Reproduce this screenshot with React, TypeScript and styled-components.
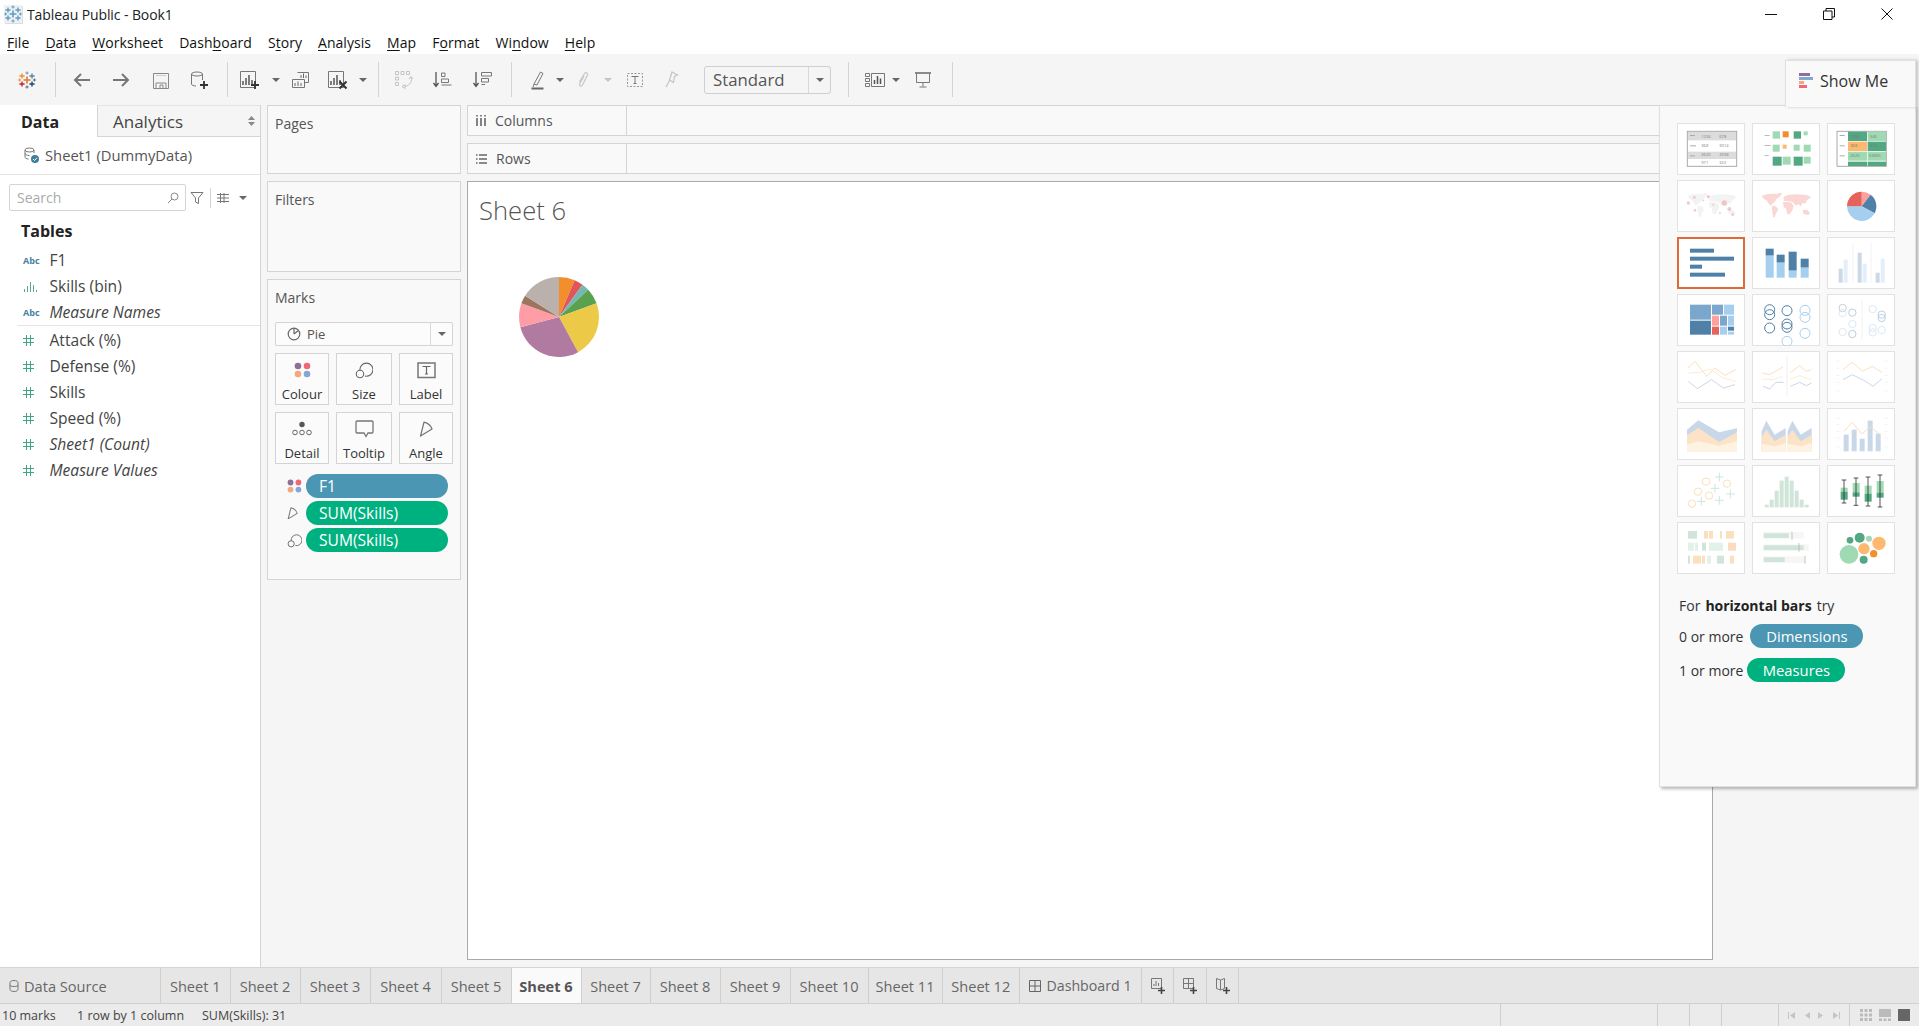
import React from "react";
import styled, { createGlobalStyle } from "styled-components";

const FONT = `"Open Sans", "Noto Sans", "Liberation Sans", sans-serif`;

const Global = createGlobalStyle`
  html, body { margin: 0; padding: 0; background: #fff; overflow: hidden; }
  * { box-sizing: border-box; }
  body { font-family: ${FONT}; color: #333; }
`;

const Page = styled.div`
  width: 1919px; height: 1026px; display: flex; flex-direction: column; background: #f5f5f5; overflow: hidden;
`;
const TitleBar = styled.div`
  height: 27px; flex: none; background: #fff; display: flex; align-items: center; padding-left: 4px;
`;
const TitleText = styled.span`
  font-size: 14px; color: #222; margin-left: 5px; margin-top: 1px; flex: 1; letter-spacing: -0.1px;
`;
const WinControls = styled.div`
  display: flex; align-items: center; padding-right: 26px; gap: 46px; margin-top: 0;
`;
const MenuBar = styled.div`
  height: 27px; flex: none; background: #fff; display: flex; align-items: center; gap: 16px; padding: 3px 0 0 7px;
`;
const MenuItem = styled.span`
  font-size: 14px; color: #111; letter-spacing: 0.05px;
  u { text-decoration-thickness: 1px; text-underline-offset: 2px; }
`;
const Toolbar = styled.div`
  height: 51px; flex: none; background: #f5f5f5; display: flex; align-items: center;
`;
const ToolGroup = styled.div<{ $w: number; $pl: number }>`
  width: ${p => p.$w}px; height: 35px; padding-left: ${p => p.$pl}px; display: flex; align-items: center; flex: none;
  border-right: 1px solid #d4d4d4;
`;
const ToolCell = styled.div<{ $w: number }>`
  width: ${p => p.$w}px; flex: none; display: flex; align-items: center; justify-content: center; height: 24px;
`;
const Caret = styled.span<{ $c?: string }>`
  display: inline-block; width: 0; height: 0; border-left: 4px solid transparent; border-right: 4px solid transparent;
  border-top: 4px solid ${p => p.$c ?? "#666"};
`;
const Combo = styled.div`
  margin-left: 18px; width: 127px; height: 28px; border: 1px solid #cfcfcf; border-radius: 3px; display: flex; align-items: center;
  font-size: 16.8px; color: #555; background: #f5f5f5;
`;
const ComboLabel = styled.span`
  flex: 1; padding-left: 8px; height: 100%; display: flex; align-items: center; border-right: 1px solid #d8d8d8;
`;
const ComboArrow = styled.span`
  width: 21px; display: flex; justify-content: center;
`;
const Body = styled.div`
  flex: 1; min-height: 0; display: flex; position: relative;
`;
const LeftPanel = styled.div`
  width: 261px; flex: none; background: #fff; border-right: 1px solid #d4d4d4; display: flex; flex-direction: column;
`;
const TabRow = styled.div`
  height: 32px; flex: none; display: flex;
`;
const DataTab = styled.div`
  width: 97px; font-size: 16px; font-weight: 700; color: #222; padding: 2px 0 0 21px; display: flex; align-items: center;
`;
const AnalyticsTab = styled.div`
  flex: 1; background: #f5f5f5; border-left: 1px solid #d4d4d4; border-bottom: 1px solid #d4d4d4; border-top: 1px solid #e4e4e4;
  font-size: 17px; color: #444; padding-left: 15px; display: flex; align-items: center; justify-content: space-between; padding-right: 5px;
`;
const SortMark = styled.span`
  display: flex; flex-direction: column; gap: 2px; align-items: center;
`;
const SourceRow = styled.div`
  height: 38px; flex: none; border-bottom: 1px solid #e4e4e4; display: flex; align-items: center; padding: 0 0 2px 23px; gap: 6px;
  font-size: 14.8px; color: #555;
`;
const SearchRow = styled.div`
  margin: 9px 0 0 9px; height: 27px; flex: none; display: flex; align-items: center;
`;
const SearchBox = styled.div`
  width: 177px; height: 27px; border: 1px solid #d4d4d4; border-radius: 2px; padding: 0 6px 0 7px;
  display: flex; align-items: center; justify-content: space-between; font-size: 14px; color: #aaa;
`;
const SearchTools = styled.div`
  display: flex; align-items: center; margin-left: 4px;
`;
const VSep = styled.span`
  width: 1px; height: 20px; background: #d4d4d4; margin: 0 6px 0 6px;
`;
const TablesHead = styled.div`
  margin: 8px 0 4px 21px; height: 24px; font-size: 16px; font-weight: 700; color: #222; display: flex; align-items: center;
`;
const FieldGroup = styled.div<{ $line?: boolean }>`
  margin-left: 17px; display: flex; flex-direction: column;
  ${p => (p.$line ? "border-bottom: 1px solid #e4e4e4; padding-bottom: 0; margin-bottom: 1px;" : "")}
`;
const FieldRow = styled.div<{ $italic?: boolean }>`
  height: 26px; display: flex; align-items: center; font-size: 15.6px; color: #444;
  font-style: ${p => (p.$italic ? "italic" : "normal")};
`;
const FieldIcon = styled.span<{ $c: string }>`
  width: 32.5px; flex: none; font-size: 9px; font-weight: 700; font-style: normal; color: ${p => p.$c}; padding-left: 6px; display: flex; align-items: center;
`;
const MidCol = styled.div`
  width: 194px; margin-left: 6px; flex: none; display: flex; flex-direction: column; gap: 7px;
`;
const Card = styled.div<{ $h: number }>`
  height: ${p => p.$h}px; flex: none; background: #f9f9f9; border: 1px solid #d4d4d4; padding: 0 7px;
`;
const CardLabel = styled.div`
  height: 34px; font-size: 14px; color: #555; display: flex; align-items: center;
`;
const MarkSelect = styled.div`
  margin-top: 8px; height: 24px; background: #fcfcfc; border: 1px solid #d4d4d4; border-radius: 2px; display: flex; align-items: center; font-size: 13px; color: #555;
`;
const MarkSelectLabel = styled.span`
  flex: 1; height: 100%; padding-left: 11px; gap: 6px; display: flex; align-items: center; border-right: 1px solid #d8d8d8;
`;
const MarkSelectArrow = styled.span`
  width: 21px; display: flex; justify-content: center;
`;
const MarkGrid = styled.div`
  display: grid; grid-template-columns: 54px 56px 54px; grid-auto-rows: 52px; column-gap: 7px; row-gap: 7px; margin-top: 7px;
`;
const MarkBtn = styled.div`
  border: 1px solid #d4d4d4; background: #fbfbfb; display: flex; flex-direction: column; align-items: center; font-size: 13px; color: #333;
  padding-top: 6px;
`;
const MarkIcon = styled.div`
  height: 20px; display: flex; align-items: center; justify-content: center; margin-bottom: 5px;
`;
const PillRows = styled.div`
  margin-top: 10px; display: flex; flex-direction: column; gap: 3px;
`;
const PillRow = styled.div`
  display: flex; align-items: center; height: 24px;
`;
const PillIcon = styled.div`
  width: 31px; padding-left: 12px; display: flex; align-items: center; flex: none;
`;
const Pill = styled.div<{ $c: string }>`
  width: 142px; height: 24px; border-radius: 12px; background: ${p => p.$c}; color: #fff; font-size: 15.6px; padding-left: 13px; display: flex; align-items: center;
`;
const RightCol = styled.div`
  width: 1246px; margin-left: 6px; flex: none; display: flex; flex-direction: column; gap: 7px; padding-bottom: 7px;
`;
const Shelf = styled.div`
  height: 31px; flex: none; background: #f9f9f9; border: 1px solid #d4d4d4; display: flex;
`;
const ShelfLabel = styled.div`
  width: 159px; flex: none; border-right: 1px solid #d4d4d4; display: flex; align-items: center; padding-left: 8px; gap: 9px; font-size: 14px; color: #555;
`;
const Canvas = styled.div`
  flex: 1; background: #fff; border: 1px solid #aaa; padding: 12px 11px;
`;
const SheetTitle = styled.div`
  font-size: 25.6px; font-weight: 300; color: #555; line-height: 34px;
`;
const PieBox = styled.div`
  margin: 47px 0 0 38px; width: 84px; height: 84px;
`;
const ShowMePanel = styled.div`
  position: absolute; left: 1659px; top: 0; width: 257px; height: 682px; background: #f9f9f9;
  border: 1px solid #e0e0e0; border-top-color: #ddd; box-shadow: 2px 2px 3px rgba(0,0,0,.28); padding: 17px 17px 0 17px;
`;
const ShowMeTab = styled.div`
  position: absolute; left: 125px; top: -46px; width: 131px; height: 47px; background: #f9f9f9;
  border: 1px solid #e0e0e0; border-bottom: none; box-shadow: 2px 0 3px rgba(0,0,0,.2);
  display: flex; align-items: center; padding: 0 0 6px 13px; gap: 6px; font-size: 16px; color: #333;
`;
const ThumbGrid = styled.div`
  display: grid; grid-template-columns: repeat(3, 68px); grid-auto-rows: 52px; column-gap: 7px; row-gap: 5px;
`;
const Thumb = styled.div<{ $sel?: boolean }>`
  background: #fff; border: 1px solid #e2e2e2; position: relative;
  ${p => (p.$sel ? "border: 2px solid #de6a36;" : "")}
  svg { display: block; margin: ${p => (p.$sel ? "-2px" : "-1px")}; }
`;
const Hint = styled.div<{ $top: number }>`
  margin: ${p => p.$top}px 0 0 2px; font-size: 14px; color: #333; display: flex; align-items: center; height: 24px; gap: 4px;
  b { font-weight: 700; color: #222; margin: 0 1px; }
`;
const HintPill = styled.span<{ $c: string; $w: number; $ml?: number }>`
  height: 24px; width: ${p => p.$w}px; margin-left: ${p => p.$ml ?? 0}px; border-radius: 12px; background: ${p => p.$c}; color: #fff; font-size: 14.8px; display: flex; align-items: center; justify-content: center;
`;
const SheetTabs = styled.div`
  height: 37px; flex: none; background: #e6e6e6; border-top: 1px solid #d4d4d4; border-bottom: 1px solid #d0d0d0; display: flex;
`;
const SheetTab = styled.div<{ $w: number; $active?: boolean }>`
  width: ${p => p.$w}px; flex: none; height: 100%; border-right: 1px solid #cfcfcf; display: flex; align-items: center; justify-content: center; gap: 5px;
  font-size: 14.6px; color: ${p => (p.$active ? "#555" : "#666")}; font-weight: ${p => (p.$active ? 700 : 400)};
  background: ${p => (p.$active ? "#fafafa" : "transparent")};
`;
const SourceTab = styled(SheetTab)`
  justify-content: flex-start; padding-left: 9px;
`;
const DashTab = styled(SheetTab)`
  font-size: 14.2px;
`;
const StatusBar = styled.div`
  height: 22px; flex: none; background: #ebebeb; display: flex; font-size: 12.5px; color: #444;
`;
const StatusText = styled.span<{ $w: number }>`
  width: ${p => p.$w}px; flex: none; display: flex; align-items: center; padding-left: 2px; white-space: nowrap;
`;
const StatusCell = styled.div<{ $w: number }>`
  width: ${p => p.$w}px; flex: none; border-left: 1px solid #cfcfcf; display: flex; align-items: center; justify-content: space-around; padding: 0 6px;
`;
const AppIconBox = styled.span`
  width: 18px; height: 18px; display: flex; background: #f0f0f0; box-shadow: 1px 1px 0 #ddd;
`;

/* ---------- icons ---------- */
const Cross = ({ x, y, s, c, w = 1.4 }: { x: number; y: number; s: number; c: string; w?: number }) => (
  <path d={`M${x - s} ${y}H${x + s}M${x} ${y - s}V${y + s}`} stroke={c} strokeWidth={w} fill="none" />
);
const TableauLogo = ({ mono }: { mono?: boolean }) => {
  const c = (k: string) => (mono ? "#5b9fc9" : k);
  return (
    <svg width="18" height="18" viewBox="0 0 18 18">
      <Cross x={9} y={9} s={3.5} c={c("#e8762d")} w={1.6} />
      <Cross x={4} y={5} s={2.6} c={c("#f28e2b")} />
      <Cross x={14} y={5} s={2.6} c={c("#5b879b")} />
      <Cross x={4} y={13} s={2.6} c={c("#c72037")} />
      <Cross x={14} y={13} s={2.6} c={c("#1f447e")} />
      <Cross x={9} y={2} s={1.6} c={c("#7099a6")} w={1} />
      <Cross x={9} y={16} s={1.6} c={c("#5b6591")} w={1} />
      <Cross x={1.6} y={9} s={1.5} c={c("#eb9129")} w={1} />
      <Cross x={16.4} y={9} s={1.5} c={c("#5b6591")} w={1} />
    </svg>
  );
};
const Ico = ({ w = 20, h = 20, children }: { w?: number; h?: number; children: React.ReactNode }) => (
  <svg width={w} height={h} viewBox={`0 0 ${w} ${h}`} fill="none" stroke="#666" strokeWidth="1">
    {children}
  </svg>
);
const Arrow = ({ flip }: { flip?: boolean }) => (
  <svg width="18" height="14" viewBox="0 0 18 14" fill="none" stroke="#777" strokeWidth="2" style={flip ? { transform: "scaleX(-1)" } : undefined}>
    <path d="M17 7H2M8 1L2 7l6 6" />
  </svg>
);
const Plus = ({ x, y }: { x: number; y: number }) => <path d={`M${x - 4} ${y}h8M${x} ${y - 4}v8`} stroke="#333" strokeWidth="1.8" />;
const BarsGlyph = ({ x, y }: { x: number; y: number }) => (
  <path d={`M${x} ${y + 8}v-4M${x + 3} ${y + 8}v-7M${x + 6} ${y + 8}v-10M${x + 9} ${y + 8}v-5`} stroke="#555" strokeWidth="1.5" />
);
const IconSave = () => (
  <Ico><path d="M3.5 3.5h15v15h-15z" stroke="#888" /><path d="M6 18v-5h10v5M10 18v-3h3v3" stroke="#888" /><path d="M6 5.5h10" stroke="#ccc" /></Ico>
);
const IconNewDS = () => (
  <Ico w={22}>
    <ellipse cx="9" cy="4" rx="5.5" ry="2" stroke="#777" />
    <path d="M3.5 4v10c0 1.2 2 2 4.5 2M14.5 4v6" stroke="#777" />
    <Plus x={16} y={15} />
  </Ico>
);
const IconNewSheet = () => (
  <Ico w={22}>
    <path d="M1.5 1.5h15v16h-15z" stroke="#777" />
    <BarsGlyph x={4} y={7} />
    <Plus x={16} y={15} />
  </Ico>
);
const IconDup = () => (
  <Ico w={20}>
    <path d="M6.500 2.500h11v10h-4M1.500 9.500h12v8h-12z" stroke="#777" />
    <path d="M10 8V5M12.500 8V3.500M15 8V5.500M4 16v-3M7 16v-4.500M10 16v-3" stroke="#666" />
  </Ico>
);
const IconClear = () => (
  <Ico w={22}>
    <path d="M1.500 1.500h15v16h-15z" stroke="#777" />
    <BarsGlyph x={4} y={7} />
    <path d="M12.500 11.500l7 7M19.500 11.500l-7 7" stroke="#333" strokeWidth="2" />
  </Ico>
);
const IconSwap = () => (
  <Ico w={20}>
    <g stroke="#c4c4c4"><path d="M1.500 1.500h3v3h-3zM7 1.500h3v3H7zM12.500 1.500h3v3h-3zM1.500 7h3v3h-3zM1.500 12.500h3v3h-3z" /><path d="M17 7c1.500 4-1 8.500-6 9.500M15 9l2-2.500 2 2.500M11 14.500v4l-3-2z" /></g>
  </Ico>
);
const IconSort = ({ desc }: { desc?: boolean }) => (
  <Ico w={20}>
    <path d="M3 2v14M0.500 13l2.500 3.500L5.500 13" stroke="#555" strokeWidth="1.300" />
    {desc ? (
      <path d="M8.500 2.500h10v3.500h-10zM8.500 8.500h7v3.500h-7zM8.500 14.500h3.500" stroke="#777" />
    ) : (
      <path d="M8.500 3h3.500v3.500h-3.500zM8.500 9h7v3.500h-7zM8.500 15h10" stroke="#777" />
    )}
  </Ico>
);
const IconHighlight = () => (
  <Ico w={14} h={20}>
    <path d="M3 14L9.500 2l2.500 1.500L6 15z M2 17l1-3" stroke="#777" />
    <path d="M0.500 18.500h12" stroke="#666" strokeWidth="2" />
  </Ico>
);
const IconClip = () => (
  <Ico w={14} h={18}>
    <path d="M2.500 11L7.500 2.500c1-1.700 3.700-.800 3 1.500L5.500 14c-1 2-3.500 1-3-1L7 5" stroke="#c8c8c8" strokeWidth="1.300" />
  </Ico>
);
const IconText = () => (
  <Ico w={18} h={18}>
    <path d="M1.500 2.500h15v13h-15z" stroke="#999" strokeDasharray="2 1.500" />
    <path d="M5.500 5.500h7M9 5.500v7M7.500 12.500h3" stroke="#777" />
  </Ico>
);
const IconPin = () => (
  <Ico w={14} h={18}>
    <path d="M7 1l5.500 3-3 1.500-1 6-4-2.500zM4.500 9.500L1 16" stroke="#c4c4c4" strokeWidth="1.200" />
  </Ico>
);
const IconFit = () => (
  <Ico w={20} h={16}>
    <path d="M.500 1.500h4v3h-4zM.500 6.500h4v3h-4zM.500 11.500h4v3h-4zM6.500 1.500h13v13h-13z" stroke="#777" />
    <path d="M9.500 12V8M12.500 12V4M15.500 12V6.500" stroke="#555" strokeWidth="1.500" />
  </Ico>
);
const IconPresent = () => (
  <Ico w={18} h={16}>
    <path d="M1 1h16" stroke="#666" strokeWidth="1.500" />
    <path d="M2.500 1.500v9h13v-9M9 10.500v4M5.500 15h7" stroke="#777" />
  </Ico>
);
const Dots = ({ size = 1 }: { size?: number }) => (
  <svg width={17 * size} height={16 * size} viewBox="0 0 17 16">
    <circle cx="4" cy="4" r="3.300" fill="#8e6f9c" />
    <circle cx="13" cy="4" r="3.300" fill="#f1677a" />
    <circle cx="4" cy="12" r="3.300" fill="#f4a780" />
    <circle cx="13" cy="12" r="3.300" fill="#80a8d2" />
  </svg>
);
const SizeIcon = ({ s = 18 }: { s?: number }) => (
  <svg width={s} height={s} viewBox="0 0 18 18" fill="none" stroke="#666" strokeWidth="1.100">
    <path d="M5 9.500a6.500 6.500 0 1 1 5 5.500" />
    <circle cx="5" cy="13" r="3.700" />
  </svg>
);
const LabelIcon = () => (
  <svg width="19" height="17" viewBox="0 0 19 17" fill="none">
    <path d="M1 1h17v14.500H1z" stroke="#777" strokeWidth="1.500" />
    <path d="M5.500 4.500h8M9.500 4.500v7.500M8 12h3" stroke="#666" strokeWidth="1.200" />
  </svg>
);
const DetailIcon = () => (
  <svg width="20" height="16" viewBox="0 0 20 16" fill="none" stroke="#666">
    <circle cx="10" cy="3.500" r="2.700" fill="#555" stroke="none" />
    <circle cx="3" cy="11.500" r="2.300" /><circle cx="10" cy="11.500" r="2.300" /><circle cx="17" cy="11.500" r="2.300" />
  </svg>
);
const TooltipIcon = () => (
  <svg width="19" height="18" viewBox="0 0 19 18" fill="none" stroke="#777" strokeWidth="1.300">
    <path d="M2 1h15c.6 0 1 .4 1 1v10c0 .6-.4 1-1 1h-4l-2 3.500-2-3.500H2c-.6 0-1-.4-1-1V2c0-.6.4-1 1-1z" />
  </svg>
);
const AngleIcon = ({ s = 14 }: { s?: number }) => (
  <svg width={s} height={s * 1.15} viewBox="0 0 14 16" fill="none" stroke="#777" strokeWidth="1.300">
    <path d="M1.500 15L5 1c4 1 7 3.500 8 7z" strokeLinejoin="round" />
  </svg>
);
const PieMini = () => (
  <svg width="14" height="14" viewBox="0 0 14 14" fill="none" stroke="#666" strokeWidth="1.200">
    <circle cx="7" cy="7" r="5.800" /><path d="M7 7V1.200M7 7l4.500-3.500" />
  </svg>
);
const CylinderMini = () => (
  <svg width="10" height="12" viewBox="0 0 10 12" fill="none" stroke="#777">
    <path d="M1 2.500v7c0 1 1.500 2 4 2s4-1 4-2v-7c0-1-1.500-2-4-2s-4 1-4 2zM1 5c0 1 1.500 1.500 4 1.500S9 6 9 5" />
  </svg>
);
const DashMini = () => (
  <svg width="12" height="12" viewBox="0 0 12 12" fill="none" stroke="#666"><path d="M.5.5h11v11H.5zM6 .5v11M.5 6h11" /></svg>
);
const NewTabIcon = ({ kind }: { kind: "sheet" | "dash" | "story" }) => (
  <svg width="16" height="17" viewBox="0 0 16 17" fill="none" stroke="#777">
    {kind === "sheet" && <path d="M1.500 1.500h10v10h-10zM4 9V7M6 9V4M8.500 9V6" />}
    {kind === "dash" && <path d="M1.500 1.500h10v10h-10zM6.500 1.500v10M1.500 6.500h10" />}
    {kind === "story" && <path d="M1.500 1.500l4 1.500 4-1.500v10l-4 1.500-4-1.500zM5.500 3v10" />}
    <path d="M8 13.500h7M11.500 10v7" stroke="#444" strokeWidth="1.600" />
  </svg>
);
const SourceIcon = () => (
  <svg width="16" height="16" viewBox="0 0 16 16" fill="none" stroke="#777">
    <ellipse cx="6.500" cy="3" rx="4.500" ry="2" />
    <path d="M2 3v7c0 1 1.500 2 3.500 2M11 3v3M2 6.500c0 1 2 2 4.500 2" />
    <circle cx="12" cy="12" r="4" fill="#3f7f9f" stroke="none" />
    <path d="M10 12l1.500 1.500L14 10.800" stroke="#fff" />
  </svg>
);
const Hash = () => (
  <svg width="11" height="11" viewBox="0 0 11 11" stroke="#3fa77f" strokeWidth="1" fill="none">
    <path d="M3.500 0v11M7.500 0v11M0 3.500h11M0 7.500h11" />
  </svg>
);
const BinIcon = () => (
  <svg width="15" height="11" viewBox="0 0 15 11" stroke="#5aa98a" strokeWidth="1" fill="none">
    <path d="M1.500 11V8M4.500 11V5M7.500 11V1M10.500 11V4M13.500 11V9" />
  </svg>
);
const Tri = ({ dir, bar }: { dir: "l" | "r"; bar?: boolean }) => (
  <svg width="8" height="9" viewBox="0 0 8 9" fill="#c4c4c4">
    {dir === "l" ? <path d="M7 1v7L2 4.500z" /> : <path d="M1 1v7l5-3.500z" />}
    {bar && (dir === "l" ? <path d="M0 1h1v7H0z" /> : <path d="M7 1h1v7H7z" />)}
  </svg>
);

/* ---------- pie ---------- */
const wedge = (cx: number, cy: number, r: number, a: number, b: number) => {
  const pt = (d: number) => {
    const t = ((d - 90) * Math.PI) / 180;
    return `${(cx + r * Math.cos(t)).toFixed(2)} ${(cy + r * Math.sin(t)).toFixed(2)}`;
  };
  return `M${cx} ${cy}L${pt(a)}A${r} ${r} 0 ${b - a > 180 ? 1 : 0} 1 ${pt(b)}Z`;
};
const PIE: [number, number, string][] = [
  [0, 23, "#f28e2b"], [23, 36, "#e15759"], [36, 47, "#76b7b2"], [47, 70, "#59a14f"], [70, 151.5, "#edc948"],
  [151.5, 255, "#b07aa1"], [255, 290, "#ff9da7"], [290, 302, "#9c755f"], [302, 360, "#bab0ac"],
];

/* ---------- show me thumbnails (coordinates in 3x reference units) ---------- */
const G = "#a0dab3", DG = "#52a882", O = "#f28e2b", LO = "#ffb870", B = "#4e80a8", LB = "#a6cfef", MB = "#7ba7cc", R = "#e4635a", P = "#ffa09a";
const FO = "#fcdfbd", FL = "#feecd3", FB = "#c9d8e8", FG = "#cfe5d9", FG2 = "#e2f1e9";
type RC = [number, number, number, number, string];
const Rects = ({ items }: { items: RC[] }) => (
  <>{items.map((r, i) => <rect key={i} x={r[0]} y={r[1]} width={r[2]} height={r[3]} fill={r[4]} />)}</>
);
const Line = ({ pts, c, w = 3 }: { pts: string; c: string; w?: number }) => <polyline points={pts} fill="none" stroke={c} strokeWidth={w} />;
const Tiny = ({ x, y, t }: { x: number; y: number; t: string }) => (
  <text x={x} y={y} fontSize="12" fill="#777" fontFamily={FONT}>{t}</text>
);
const WORLD = "M5 8L22 3L45 2L62 6L55 14L48 18L44 26L36 32L30 38L24 30L18 22L8 16ZM52 0L66 0L62 6L54 6ZM34 38L46 40L54 48L48 60L42 74L38 72L36 56ZM68 28L84 26L94 30L100 40L96 52L88 64L80 62L78 48L70 42ZM70 12L82 6L110 4L140 6L152 12L140 22L134 32L126 30L122 40L114 34L106 38L98 28L84 24L70 24ZM126 52L140 50L148 58L146 66L130 64Z";
const SideDash = ({ a, b, ys }: { a: number; b: number; ys: number[] }) => (
  <>{ys.map(y => <g key={y}><path d={`M${a} ${y}h9M${b} ${y}h9`} stroke="#ececec" strokeWidth="2" /></g>)}</>
);

const THUMBS: { vb: [number, number]; sel?: boolean; art: React.ReactNode }[] = [
  { vb: [51, 220], art: <>
    <rect x="82" y="245" width="148" height="105" fill="#fff" stroke="#aaa" strokeWidth="3" />
    <Rects items={[[84, 247, 144, 25, "#dcdcdc"], [84, 306, 144, 22, "#dcdcdc"], [90, 256, 15, 3, "#aaa"], [90, 287, 18, 3, "#aaa"], [90, 317, 15, 3, "#aaa"]]} />
    <Tiny x={124} y={264} t="1234" /><Tiny x={178} y={264} t="678" /><Tiny x={124} y={292} t="368" /><Tiny x={178} y={292} t="3014" />
    <Tiny x={124} y={318} t="2620" /><Tiny x={178} y={318} t="2558" /><Tiny x={124} y={343} t="971" /><Tiny x={178} y={343} t="322" />
  </> },
  { vb: [277, 220], art: <Rects items={[
    [315, 256, 15, 3, "#bbb"], [315, 286, 18, 3, "#bbb"], [315, 316, 12, 3, "#bbb"],
    [339, 245, 22, 22, G], [369, 245, 18, 18, O], [402, 245, 22, 22, DG], [432, 245, 12, 12, G],
    [339, 285, 21, 21, G], [369, 285, 12, 12, LO], [402, 285, 18, 18, G], [432, 285, 21, 21, G],
    [339, 321, 27, 27, DG], [369, 321, 24, 24, G], [402, 321, 27, 27, DG], [432, 321, 21, 21, G],
  ]} /> },
  { vb: [502, 220], art: <>
    <rect x="532" y="245" width="148" height="105" fill="#fff" stroke="#aaa" strokeWidth="3" />
    <Rects items={[
      [565, 246, 57, 28, DG], [624, 246, 55, 28, G], [565, 276, 57, 28, LO], [624, 276, 55, 28, DG],
      [565, 306, 57, 27, G], [624, 306, 55, 27, G], [565, 336, 57, 13, DG], [624, 336, 55, 13, DG],
      [540, 256, 15, 3, "#aaa"], [540, 287, 15, 3, "#aaa"], [540, 317, 15, 3, "#aaa"],
    ]} />
    <Tiny x={572} y={264} t="1234" /><Tiny x={631} y={264} t="546" /><Tiny x={572} y={293} t="368" /><Tiny x={631} y={293} t="318" />
    <Tiny x={572} y={323} t="2620" /><Tiny x={628} y={323} t="53890" />
  </> },
  { vb: [51, 391], art: <>
    <g transform="translate(78 430)"><path d={WORLD} fill="#f3f3f3" /></g>
    <g fill="#efb5b5" fillOpacity=".75">
      {[[85, 460, 5], [103, 443, 4], [145, 441, 5], [105, 482, 4], [160, 465, 3], [193, 460, 8], [208, 478, 6], [218, 495, 4], [130, 452, 3], [180, 490, 3]].map((c, i) => <circle key={i} cx={c[0]} cy={c[1]} r={c[2]} />)}
    </g>
  </> },
  { vb: [277, 391], art: <g transform="translate(302 430)"><path d={WORLD} fill="#fad7d5" /></g> },
  { vb: [502, 391], art: <>
    <path d={wedge(606, 470, 44, 0, 38)} fill={P} /><path d={wedge(606, 470, 44, 38, 118)} fill={B} />
    <path d={wedge(606, 470, 44, 118, 270)} fill={LB} /><path d={wedge(606, 470, 44, 270, 360)} fill={R} />
  </> },
  { vb: [51, 562], sel: true, art: <Rects items={[[90, 597, 72, 12, B], [90, 621, 132, 12, B], [90, 645, 36, 12, B], [90, 669, 105, 12, B]]} /> },
  { vb: [277, 562], art: <Rects items={[
    [318, 597, 24, 21, B], [318, 618, 24, 66, LB], [351, 615, 24, 24, B], [351, 639, 24, 45, LB],
    [387, 606, 24, 57, B], [387, 663, 24, 21, LB], [423, 627, 24, 27, B], [423, 654, 24, 30, LB],
  ]} /> },
  { vb: [502, 562], art: <Rects items={[
    [579, 578, 2, 120, "#ececec"], [633, 578, 2, 120, "#ececec"],
    [537, 657, 12, 42, "#cbd9e6"], [552, 630, 12, 69, "#e3eef8"], [594, 609, 12, 90, "#cbd9e6"], [609, 642, 12, 57, "#e3eef8"],
    [648, 669, 12, 30, "#cbd9e6"], [663, 627, 12, 72, "#e3eef8"],
  ]} /> },
  { vb: [51, 733], art: <Rects items={[
    [90, 765, 63, 45, MB], [90, 813, 63, 42, B], [156, 765, 33, 30, MB], [192, 765, 30, 30, LB], [156, 798, 21, 30, P],
    [180, 798, 21, 30, MB], [204, 798, 18, 30, LB], [156, 831, 21, 24, R], [180, 831, 21, 24, LB], [204, 831, 18, 12, B], [204, 846, 18, 9, LB],
  ]} /> },
  { vb: [277, 733], art: <g fill="none" strokeWidth="3">
    {[[330, 780], [330, 795], [330, 835], [382, 783], [382, 823], [382, 833]].map((c, i) => <circle key={i} cx={c[0]} cy={c[1]} r={15} stroke={B} />)}
    {[[436, 782], [436, 803], [436, 851], [382, 875]].map((c, i) => <circle key={i} cx={c[0]} cy={c[1]} r={15} stroke={LB} />)}
  </g> },
  { vb: [502, 733], art: <>
    <path d="M607 750v118" stroke="#ececec" strokeWidth="2" />
    <g fill="none" strokeWidth="3">
      {[[549, 775, 1], [549, 790, 0], [578, 789, 1], [578, 823, 0], [549, 847, 0], [578, 853, 1], [639, 778, 0], [666, 795, 1], [666, 805, 1], [639, 835, 0], [666, 841, 0], [639, 848, 0]].map((c, i) => (
        <circle key={i} cx={c[0]} cy={c[1]} r={11} stroke={c[2] ? "#bccfe0" : "#dce9f5"} />
      ))}
    </g>
  </> },
  { vb: [51, 34], art: <>
    <Line pts="85,85 105,65 140,110 165,85 195,107 227,90" c={FO} /><Line pts="85,100 120,98 150,88 190,115 227,125" c={FL} />
    <Line pts="85,125 112,147 155,120 190,145 225,135" c={FB} />
  </> },
  { vb: [277, 34], art: <>
    <path d="M382 50v120" stroke="#e8e8e8" strokeWidth="2" />
    <Line pts="308,100 330,105 370,82" c={FO} /><Line pts="308,118 340,120 370,110" c={FL} /><Line pts="310,140 330,148 348,128 372,128" c={FB} />
    <Line pts="392,100 420,78 440,95 455,90" c={FO} /><Line pts="392,118 420,108 455,120" c={FL} /><Line pts="392,140 420,128 440,138 455,130" c={FB} />
  </> },
  { vb: [502, 34], art: <>
    <SideDash a={530} b={675} ys={[64, 85, 107, 128, 153]} />
    <Line pts="550,90 578,67 608,95 638,80 667,98" c={FO} /><Line pts="550,120 578,105 618,125 640,140 667,117" c={FB} />
  </> },
  { vb: [51, 205], art: <>
    <polygon points="81,270 115,242 177,278 231,266 231,335 81,335" fill={FB} />
    <polygon points="81,287 115,265 177,307 231,278 231,335 81,335" fill="#fde3c6" />
    <polygon points="81,315 115,305 177,318 231,305 231,335 81,335" fill="#fef3e3" />
  </> },
  { vb: [277, 205], art: <>
    {[0, 78].map(d => (
      <g key={d} transform={`translate(${d} 0)`}>
        <polygon points="306,275 320,243 345,285 378,265 378,335 306,335" fill={FB} />
        <polygon points="306,292 320,270 345,305 378,285 378,335 306,335" fill="#fde3c6" />
        <polygon points="306,312 345,320 378,310 378,335 306,335" fill="#fef3e3" />
      </g>
    ))}
  </> },
  { vb: [502, 205], art: <>
    <SideDash a={530} b={675} ys={[235, 255, 275, 295, 322]} />
    <Rects items={[[552, 285, 15, 50, "#c9d8e8"], [576, 270, 15, 65, "#c9d8e8"], [600, 297, 15, 38, "#c9d8e8"], [624, 243, 15, 92, "#c9d8e8"], [648, 282, 15, 53, "#c9d8e8"]]} />
    <Line pts="553,275 578,248 606,283 632,262 660,283" c={FO} />
  </> },
  { vb: [51, 376], art: <>
    {[[138, 426], [114, 456], [147, 468], [96, 492], [201, 432]].map((c, i) => <circle key={i} cx={c[0]} cy={c[1]} r={11} fill="none" stroke={FO} strokeWidth="3" />)}
    {[[178, 412], [165, 446], [211, 463], [124, 485], [178, 482]].map((c, i) => <path key={i} d={`M${c[0] - 13} ${c[1]}h26M${c[0]} ${c[1] - 13}v26`} stroke={FG} strokeWidth="3" />)}
  </> },
  { vb: [277, 376], art: <Rects items={[
    [315, 495, 12, 8, FG], [330, 480, 12, 23, FG], [345, 453, 12, 50, FG], [360, 423, 12, 80, FG], [375, 411, 12, 92, FG],
    [390, 423, 12, 80, FG], [405, 453, 12, 50, FG], [420, 480, 12, 23, FG], [435, 495, 12, 8, FG],
  ]} /> },
  { vb: [502, 376], art: <>
    <Rects items={[
      [543, 444, 21, 12, G], [543, 456, 21, 24, DG], [579, 430, 21, 28, G], [579, 458, 21, 13, DG],
      [615, 438, 21, 24, G], [615, 462, 21, 24, DG], [651, 424, 21, 35, G], [651, 459, 21, 15, DG],
    ]} />
    <path d="M553 421v69M546 421h14M546 490h14M589 415v82M582 415h14M582 497h14M625 412v87M618 412h14M618 499h14M661 406v96M654 406h14M654 502h14" stroke="#333" strokeWidth="2.500" fill="none" />
  </> },
  { vb: [51, 547], art: <Rects items={[
    [84, 574, 27, 23, FG], [132, 574, 12, 23, FO], [147, 574, 12, 23, FO], [180, 574, 6, 23, FO], [198, 574, 24, 23, FO],
    [84, 609, 18, 24, FG2], [105, 609, 9, 24, FG2], [126, 609, 12, 24, FG], [147, 609, 42, 24, FG2], [204, 609, 24, 24, "#fbdcc0"],
    [84, 648, 6, 24, FG], [99, 648, 24, 24, FO], [126, 648, 9, 24, FO], [141, 648, 12, 24, FG2], [171, 648, 21, 24, FG], [210, 648, 12, 24, FO],
  ]} /> },
  { vb: [277, 547], art: <Rects items={[
    [312, 577, 120, 20, "#f6f6f6"], [312, 581, 75, 14, FG], [396, 576, 2, 24, "#aaa"],
    [312, 614, 135, 20, "#f6f6f6"], [312, 617, 120, 14, FG], [417, 610, 2, 26, "#aaa"],
    [312, 650, 125, 20, "#f6f6f6"], [312, 653, 63, 14, FG], [435, 648, 2, 24, "#aaa"],
  ]} /> },
  { vb: [502, 547], art: <>
    {([[568, 644, 28, G], [600, 594, 15, DG], [571, 602, 10, DG], [628, 597, 9, G], [613, 627, 17, LO], [658, 611, 20, LO], [642, 642, 11, O], [612, 660, 12, DG]] as [number, number, number, string][]).map((c, i) => (
      <circle key={i} cx={c[0]} cy={c[1]} r={c[2]} fill={c[3]} />
    ))}
  </> },
];

const MENU: [string, string, string][] = [
  ["", "F", "ile"], ["", "D", "ata"], ["", "W", "orksheet"], ["Dash", "b", "oard"], ["S", "t", "ory"], ["", "A", "nalysis"],
  ["", "M", "ap"], ["F", "o", "rmat"], ["Wi", "n", "dow"], ["", "H", "elp"],
];
const TABS: [string, number][] = [
  ["Sheet 1", 69.5], ["Sheet 2", 70], ["Sheet 3", 70], ["Sheet 4", 71], ["Sheet 5", 70], ["Sheet 6", 70], ["Sheet 7", 69], ["Sheet 8", 70],
  ["Sheet 9", 70], ["Sheet 10", 78], ["Sheet 11", 74], ["Sheet 12", 77.5],
];

export default function App() {
  return (
    <Page>
      <Global />
      <TitleBar>
        <AppIconBox><TableauLogo mono /></AppIconBox>
        <TitleText>Tableau Public - Book1</TitleText>
        <WinControls>
          <svg width="12" height="12" viewBox="0 0 12 12" stroke="#111" fill="none"><path d="M0 6.500h12" /></svg>
          <svg width="12" height="12" viewBox="0 0 12 12" stroke="#111" fill="none"><path d="M.5 3h8.500v8.500H.5zM3 3V.5h8.500V9H9" /></svg>
          <svg width="12" height="12" viewBox="0 0 12 12" stroke="#111" fill="none"><path d="M.5.5l11 11M11.500.5l-11 11" /></svg>
        </WinControls>
      </TitleBar>
      <MenuBar>
        {MENU.map(m => (
          <MenuItem key={m[1] + m[2]}>{m[0]}<u>{m[1]}</u>{m[2]}</MenuItem>
        ))}
      </MenuBar>
      <Toolbar>
        <ToolGroup $w={56} $pl={18}><TableauLogo /></ToolGroup>
        <ToolGroup $w={172} $pl={6}>
          <ToolCell $w={39}><Arrow /></ToolCell>
          <ToolCell $w={39}><Arrow flip /></ToolCell>
          <ToolCell $w={39}><IconSave /></ToolCell>
          <ToolCell $w={39}><IconNewDS /></ToolCell>
        </ToolGroup>
        <ToolGroup $w={151} $pl={4}>
          <ToolCell $w={36}><IconNewSheet /></ToolCell>
          <ToolCell $w={16}><Caret /></ToolCell>
          <ToolCell $w={34}><IconDup /></ToolCell>
          <ToolCell $w={40}><IconClear /></ToolCell>
          <ToolCell $w={10}><Caret /></ToolCell>
        </ToolGroup>
        <ToolGroup $w={133} $pl={5}>
          <ToolCell $w={39}><IconSwap /></ToolCell>
          <ToolCell $w={40}><IconSort /></ToolCell>
          <ToolCell $w={40}><IconSort desc /></ToolCell>
        </ToolGroup>
        <ToolGroup $w={337} $pl={8}>
          <ToolCell $w={36}><IconHighlight /></ToolCell>
          <ToolCell $w={8}><Caret /></ToolCell>
          <ToolCell $w={40}><IconClip /></ToolCell>
          <ToolCell $w={8}><Caret $c="#c4c4c4" /></ToolCell>
          <ToolCell $w={46}><IconText /></ToolCell>
          <ToolCell $w={28}><IconPin /></ToolCell>
          <Combo>
            <ComboLabel>Standard</ComboLabel>
            <ComboArrow><Caret /></ComboArrow>
          </Combo>
        </ToolGroup>
        <ToolGroup $w={104} $pl={9}>
          <ToolCell $w={34}><IconFit /></ToolCell>
          <ToolCell $w={8}><Caret /></ToolCell>
          <ToolCell $w={46}><IconPresent /></ToolCell>
        </ToolGroup>
      </Toolbar>
      <Body>
        <LeftPanel>
          <TabRow>
            <DataTab>Data</DataTab>
            <AnalyticsTab>
              Analytics
              <SortMark>
                <svg width="7" height="4" viewBox="0 0 7 4" fill="#888"><path d="M0 4l3.500-4L7 4z" /></svg>
                <svg width="7" height="4" viewBox="0 0 7 4" fill="#888"><path d="M0 0l3.500 4L7 0z" /></svg>
              </SortMark>
            </AnalyticsTab>
          </TabRow>
          <SourceRow><SourceIcon />Sheet1 (DummyData)</SourceRow>
          <SearchRow>
            <SearchBox>
              Search
              <svg width="12" height="12" viewBox="0 0 12 12" fill="none" stroke="#888"><circle cx="7.500" cy="4.500" r="3.500" /><path d="M5 7l-4 4" /></svg>
            </SearchBox>
            <SearchTools>
              <svg width="14" height="14" viewBox="0 0 14 14" fill="none" stroke="#777"><path d="M1 1.500h12L8.500 7v5.500l-3-1.500V7z" /></svg>
              <VSep />
              <svg width="12" height="10" viewBox="0 0 12 10" fill="none" stroke="#777"><path d="M0 1.500h12M0 5h12M0 8.500h12M3.500 0v10M7 0v10" /></svg>
              <svg width="20" height="6" viewBox="0 0 20 6" fill="#666"><path d="M10 1h8l-4 4z" /></svg>
            </SearchTools>
          </SearchRow>
          <TablesHead>Tables</TablesHead>
          <FieldGroup $line>
            <FieldRow><FieldIcon $c="#4a7fa0">Abc</FieldIcon>F1</FieldRow>
            <FieldRow><FieldIcon $c="#5aa98a"><BinIcon /></FieldIcon>Skills (bin)</FieldRow>
            <FieldRow $italic><FieldIcon $c="#4a7fa0">Abc</FieldIcon>Measure Names</FieldRow>
          </FieldGroup>
          <FieldGroup>
            <FieldRow><FieldIcon $c="#3fa77f"><Hash /></FieldIcon>Attack (%)</FieldRow>
            <FieldRow><FieldIcon $c="#3fa77f"><Hash /></FieldIcon>Defense (%)</FieldRow>
            <FieldRow><FieldIcon $c="#3fa77f"><Hash /></FieldIcon>Skills</FieldRow>
            <FieldRow><FieldIcon $c="#3fa77f"><Hash /></FieldIcon>Speed (%)</FieldRow>
            <FieldRow $italic><FieldIcon $c="#3fa77f"><Hash /></FieldIcon>Sheet1 (Count)</FieldRow>
            <FieldRow $italic><FieldIcon $c="#3fa77f"><Hash /></FieldIcon>Measure Values</FieldRow>
          </FieldGroup>
        </LeftPanel>
        <MidCol>
          <Card $h={69}><CardLabel>Pages</CardLabel></Card>
          <Card $h={91}><CardLabel>Filters</CardLabel></Card>
          <Card $h={301}>
            <CardLabel>Marks</CardLabel>
            <MarkSelect>
              <MarkSelectLabel><PieMini />Pie</MarkSelectLabel>
              <MarkSelectArrow><Caret /></MarkSelectArrow>
            </MarkSelect>
            <MarkGrid>
              <MarkBtn><MarkIcon><Dots /></MarkIcon>Colour</MarkBtn>
              <MarkBtn><MarkIcon><SizeIcon /></MarkIcon>Size</MarkBtn>
              <MarkBtn><MarkIcon><LabelIcon /></MarkIcon>Label</MarkBtn>
              <MarkBtn><MarkIcon><DetailIcon /></MarkIcon>Detail</MarkBtn>
              <MarkBtn><MarkIcon><TooltipIcon /></MarkIcon>Tooltip</MarkBtn>
              <MarkBtn><MarkIcon><AngleIcon /></MarkIcon>Angle</MarkBtn>
            </MarkGrid>
            <PillRows>
              <PillRow><PillIcon><Dots size={0.88} /></PillIcon><Pill $c="#4a96b3">F1</Pill></PillRow>
              <PillRow><PillIcon><AngleIcon s={11} /></PillIcon><Pill $c="#00b180">SUM(Skills)</Pill></PillRow>
              <PillRow><PillIcon><SizeIcon s={15} /></PillIcon><Pill $c="#00b180">SUM(Skills)</Pill></PillRow>
            </PillRows>
          </Card>
        </MidCol>
        <RightCol>
          <Shelf>
            <ShelfLabel>
              <svg width="10" height="11" viewBox="0 0 10 11" stroke="#666" strokeWidth="1.600"><path d="M1 3v8M5 3v8M9 3v8M1 0v1.500M5 0v1.500M9 0v1.500" /></svg>
              Columns
            </ShelfLabel>
          </Shelf>
          <Shelf>
            <ShelfLabel>
              <svg width="11" height="10" viewBox="0 0 11 10" stroke="#666" strokeWidth="1.600"><path d="M3 1h8M3 5h8M3 9h8M0 1h1.500M0 5h1.500M0 9h1.500" /></svg>
              Rows
            </ShelfLabel>
          </Shelf>
          <Canvas>
            <SheetTitle>Sheet 6</SheetTitle>
            <PieBox>
              <svg width="84" height="84" viewBox="0 0 84 84">
                {PIE.map(s => <path key={s[2]} d={wedge(42, 42, 40, s[0], s[1])} fill={s[2]} />)}
              </svg>
            </PieBox>
          </Canvas>
        </RightCol>
        <ShowMePanel>
          <ShowMeTab>
            <svg width="15" height="16" viewBox="0 0 15 16">
              <rect x="0" y="0" width="11" height="3" fill="#8e6f9c" />
              <rect x="0" y="4" width="14" height="3" fill="#80a8d2" />
              <rect x="0" y="8" width="5" height="3" fill="#f4a780" />
              <rect x="0" y="12" width="8" height="3" fill="#f1677a" />
            </svg>
            Show Me
          </ShowMeTab>
          <ThumbGrid>
            {THUMBS.map((t, i) => (
              <Thumb key={i} $sel={t.sel}>
                <svg width="68" height="52" viewBox={`${t.vb[0]} ${t.vb[1]} 204 156`}>{t.art}</svg>
              </Thumb>
            ))}
          </ThumbGrid>
          <Hint $top={19}>For <b>horizontal bars</b> try</Hint>
          <Hint $top={7}>0 or more <HintPill $c="#4a96b3" $w={113} $ml={3}>Dimensions</HintPill></Hint>
          <Hint $top={10}>1 or more <HintPill $c="#00b180" $w={98}>Measures</HintPill></Hint>
        </ShowMePanel>
      </Body>
      <SheetTabs>
        <SourceTab $w={161}><CylinderMini />Data Source</SourceTab>
        {TABS.map(t => <SheetTab key={t[0]} $w={t[1]} $active={t[0] === "Sheet 6"}>{t[0]}</SheetTab>)}
        <DashTab $w={122}><DashMini />Dashboard 1</DashTab>
        <SheetTab $w={32}><NewTabIcon kind="sheet" /></SheetTab>
        <SheetTab $w={33}><NewTabIcon kind="dash" /></SheetTab>
        <SheetTab $w={32}><NewTabIcon kind="story" /></SheetTab>
      </SheetTabs>
      <StatusBar>
        <StatusText $w={75}>10 marks</StatusText>
        <StatusText $w={125}>1 row by 1 column</StatusText>
        <StatusText $w={1300}>SUM(Skills): 31</StatusText>
        <StatusCell $w={157} />
        <StatusCell $w={32} />
        <StatusCell $w={32} />
        <StatusCell $w={57} />
        <StatusCell $w={71}><Tri dir="l" bar /><Tri dir="l" /><Tri dir="r" /><Tri dir="r" bar /></StatusCell>
        <StatusCell $w={70}>
          <svg width="12" height="12" viewBox="0 0 12 12" fill="#bbb"><path d="M0 0h3v3H0zM4.500 0h3v3h-3zM9 0h3v3H9zM0 4.500h3v3H0zM4.500 4.500h3v3h-3zM9 4.500h3v3H9zM0 9h3v3H0zM4.500 9h3v3h-3zM9 9h3v3H9z" /></svg>
          <svg width="12" height="12" viewBox="0 0 12 12" fill="#bbb"><path d="M0 0h12v8H0zM0 9.500h3V12H0zM4.500 9.500h3V12h-3zM9 9.500h3V12H9z" /></svg>
          <svg width="12" height="12" viewBox="0 0 12 12" fill="#666"><path d="M0 0h12v12H0z" /></svg>
        </StatusCell>
      </StatusBar>
    </Page>
  );
}
